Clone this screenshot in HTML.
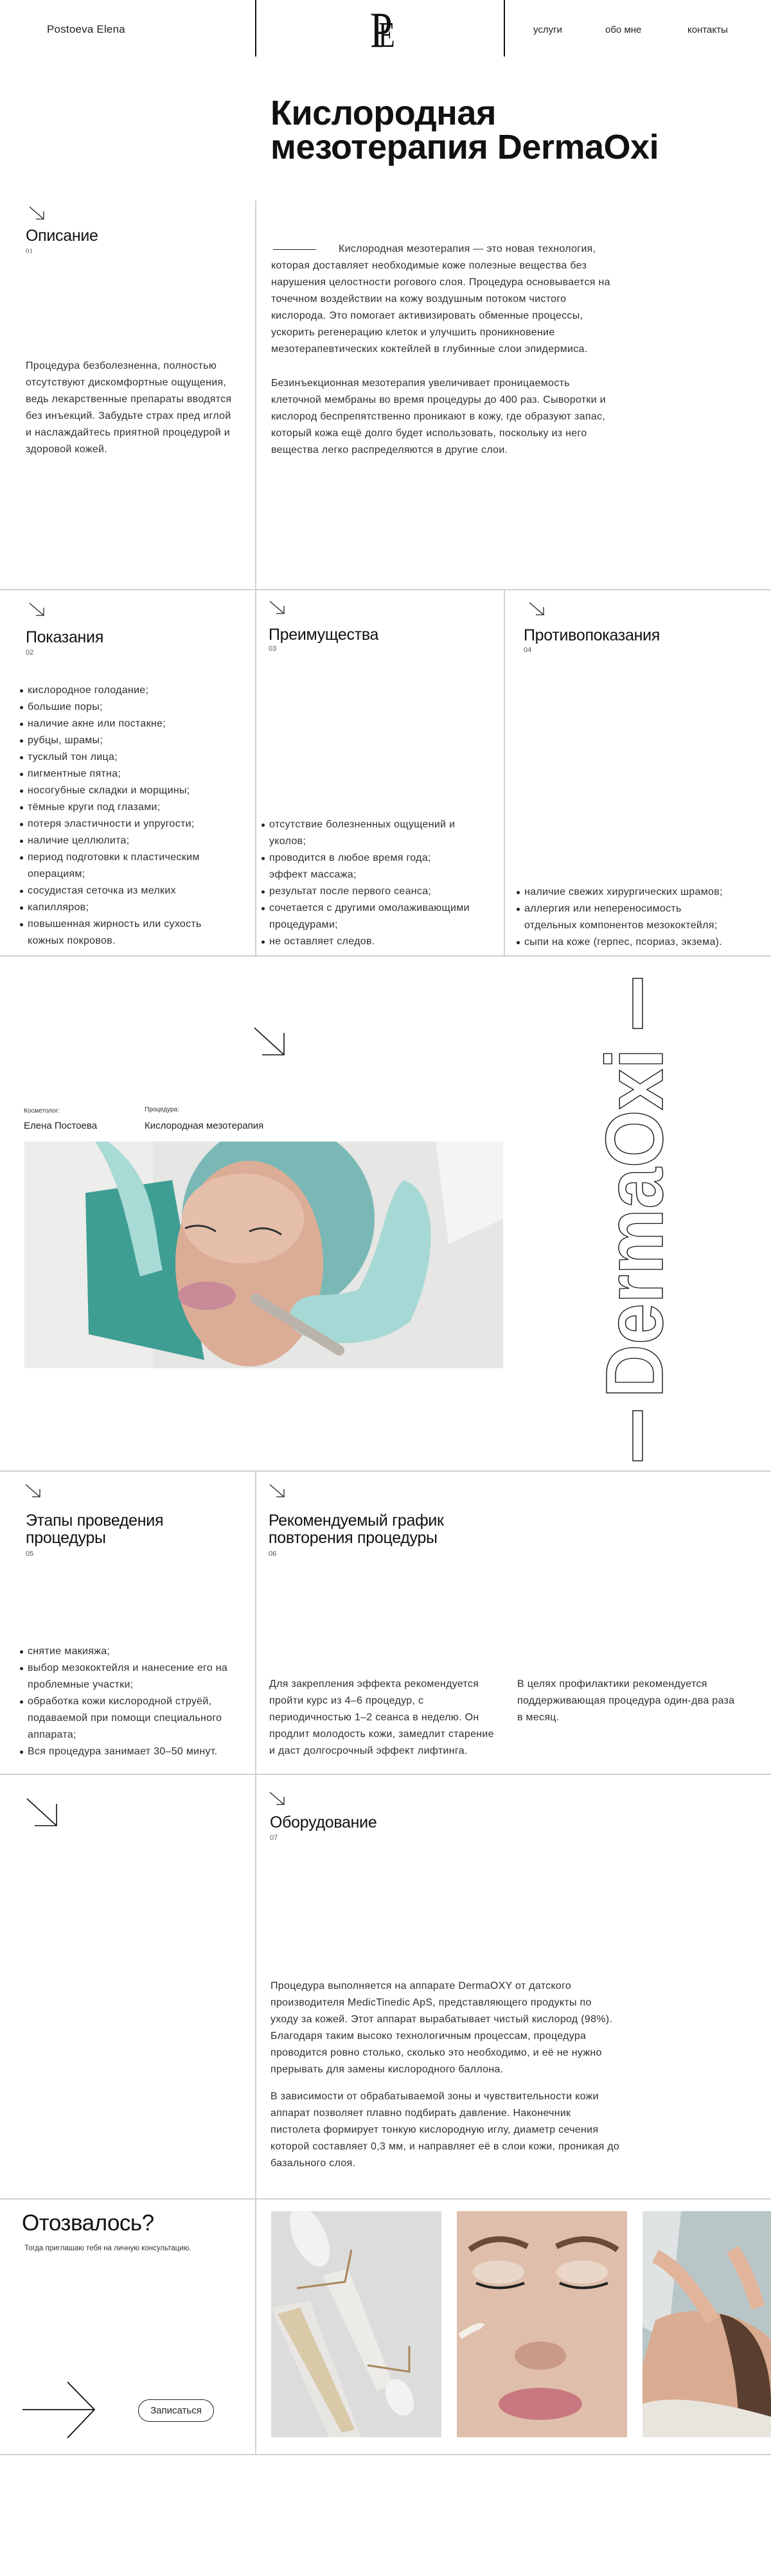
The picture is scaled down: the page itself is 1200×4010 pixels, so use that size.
<!DOCTYPE html>
<html lang="ru">
<head>
<meta charset="utf-8">
<style>
*{margin:0;padding:0;box-sizing:border-box}
html,body{width:1200px;height:4010px;background:#fff;overflow:hidden}
body{position:relative;font-family:"Liberation Sans","DejaVu Sans",sans-serif;color:#2a2a2a}
.a{position:absolute}
.hl{position:absolute;left:0;width:1200px;height:2px;background:#d2d2d2}
.vl{position:absolute;width:2px;background:#d2d2d2}
.t{position:absolute;font-size:16px;line-height:26px;letter-spacing:0.3px;white-space:nowrap;color:#2f2f2f}
.h{position:absolute;font-size:25px;font-weight:500;letter-spacing:-0.3px;color:#111;white-space:nowrap;line-height:30px}
.n{position:absolute;font-size:11px;color:#555;font-family:"Liberation Sans",sans-serif}
.li{position:relative;padding-left:12px}
.li.b::before{content:"";position:absolute;left:0;top:11px;width:5px;height:5px;border-radius:50%;background:#222}
</style>
</head>
<body>
<!-- header -->
<div class="a" style="left:73px;top:36px;font-size:17px;color:#222;letter-spacing:0.2px">Postoeva Elena</div>
<div class="a" style="left:397px;top:0;width:2px;height:88px;background:#111"></div>
<div class="a" style="left:784px;top:0;width:2px;height:88px;background:#111"></div>
<div class="a" style="left:576px;top:8px;font-family:'Liberation Serif',serif;font-size:78px;line-height:78px;color:#111;transform:scaleX(0.8);transform-origin:left">P</div>
<div class="a" style="left:589px;top:27px;font-family:'Liberation Serif',serif;font-size:56px;line-height:56px;color:#111;transform:scaleX(0.75);transform-origin:left">E</div>
<div class="a" style="left:830px;top:38px;font-size:15px;color:#222">услуги</div>
<div class="a" style="left:942px;top:38px;font-size:15px;color:#222">обо мне</div>
<div class="a" style="left:1070px;top:38px;font-size:15px;color:#222">контакты</div>

<!-- title -->
<div class="a" style="left:421px;top:150px;font-size:54px;line-height:53px;font-weight:bold;color:#111;letter-spacing:-0.5px;white-space:nowrap">Кислородная<br>мезотерапия DermaOxi</div>

<!-- section 1 -->
<div class="vl" style="left:397px;top:312px;height:606px"></div>
<svg class="a" style="left:44px;top:320px" width="28" height="24" viewBox="0 0 28 24"><path d="M2 2 L24 21 M12 21 H24 V9" stroke="#222" stroke-width="1.3" fill="none"/></svg>
<div class="h" style="left:40px;top:352px">Описание</div>
<div class="n" style="left:40px;top:385px;font-family:'Liberation Serif',serif">01</div>
<div class="t" style="left:40px;top:557px">Процедура безболезненна, полностью<br>отсутствуют дискомфортные ощущения,<br>ведь лекарственные препараты вводятся<br>без инъекций. Забудьте страх пред иглой<br>и наслаждайтесь приятной процедурой и<br>здоровой кожей.</div>
<div class="a" style="left:425px;top:388px;width:67px;height:1px;background:#222"></div>
<div class="t" style="left:422px;top:375px"><span style="display:inline-block;width:105px"></span>Кислородная мезотерапия — это новая технология,<br>которая доставляет необходимые коже полезные вещества без<br>нарушения целостности рогового слоя. Процедура основывается на<br>точечном воздействии на кожу воздушным потоком чистого<br>кислорода. Это помогает активизировать обменные процессы,<br>ускорить регенерацию клеток и улучшить проникновение<br>мезотерапевтических коктейлей в глубинные слои эпидермиса.</div>
<div class="t" style="left:422px;top:584px">Безинъекционная мезотерапия увеличивает проницаемость<br>клеточной мембраны во время процедуры до 400 раз. Сыворотки и<br>кислород беспрепятственно проникают в кожу, где образуют запас,<br>который кожа ещё долго будет использовать, поскольку из него<br>вещества легко распределяются в другие слои.</div>
<div class="hl" style="top:917px"></div>

<!-- section 2 -->
<div class="vl" style="left:397px;top:918px;height:572px"></div>
<div class="vl" style="left:784px;top:918px;height:572px"></div>
<svg class="a" style="left:44px;top:937px" width="28" height="24" viewBox="0 0 28 24"><path d="M2 2 L24 21 M12 21 H24 V9" stroke="#222" stroke-width="1.3" fill="none"/></svg>
<svg class="a" style="left:418px;top:934px" width="28" height="24" viewBox="0 0 28 24"><path d="M2 2 L24 21 M12 21 H24 V9" stroke="#222" stroke-width="1.3" fill="none"/></svg>
<svg class="a" style="left:822px;top:936px" width="28" height="24" viewBox="0 0 28 24"><path d="M2 2 L24 21 M12 21 H24 V9" stroke="#222" stroke-width="1.3" fill="none"/></svg>
<div class="h" style="left:40px;top:977px">Показания</div>
<div class="n" style="left:40px;top:1010px">02</div>
<div class="h" style="left:418px;top:973px">Преимущества</div>
<div class="n" style="left:418px;top:1004px">03</div>
<div class="h" style="left:815px;top:974px">Противопоказания</div>
<div class="n" style="left:815px;top:1006px">04</div>

<div class="t" style="left:31px;top:1062px">
<div class="li b">кислородное голодание;</div>
<div class="li b">большие поры;</div>
<div class="li b">наличие акне или постакне;</div>
<div class="li b">рубцы, шрамы;</div>
<div class="li b">тусклый тон лица;</div>
<div class="li b">пигментные пятна;</div>
<div class="li b">носогубные складки и морщины;</div>
<div class="li b">тёмные круги под глазами;</div>
<div class="li b">потеря эластичности и упругости;</div>
<div class="li b">наличие целлюлита;</div>
<div class="li b">период подготовки к пластическим</div>
<div class="li">операциям;</div>
<div class="li b">сосудистая сеточка из мелких</div>
<div class="li b">капилляров;</div>
<div class="li b">повышенная жирность или сухость</div>
<div class="li">кожных покровов.</div>
</div>
<div class="t" style="left:407px;top:1271px">
<div class="li b">отсутствие болезненных ощущений и</div>
<div class="li">уколов;</div>
<div class="li b">проводится в любое время года;</div>
<div class="li">эффект массажа;</div>
<div class="li b">результат после первого сеанса;</div>
<div class="li b">сочетается с другими омолаживающими</div>
<div class="li">процедурами;</div>
<div class="li b">не оставляет следов.</div>
</div>
<div class="t" style="left:804px;top:1376px">
<div class="li b">наличие свежих хирургических шрамов;</div>
<div class="li b">аллергия или непереносимость</div>
<div class="li">отдельных компонентов мезококтейля;</div>
<div class="li b">сыпи на коже (герпес, псориаз, экзема).</div>
</div>
<div class="hl" style="top:1487px"></div>

<!-- section 3 photo -->
<svg class="a" style="left:394px;top:1598px" width="54" height="48" viewBox="0 0 54 48"><path d="M2 2 L48 44 M14 44 H48 V10" stroke="#111" stroke-width="1.6" fill="none"/></svg>
<div class="a" style="left:37px;top:1724px;font-size:10px;color:#333">Косметолог:</div>
<div class="a" style="left:37px;top:1744px;font-size:15px;color:#222">Елена Постоева</div>
<div class="a" style="left:225px;top:1722px;font-size:10px;color:#333">Процедура:</div>
<div class="a" style="left:225px;top:1744px;font-size:15px;color:#222">Кислородная мезотерапия</div>
<svg class="a" style="left:38px;top:1777px" width="745" height="353" viewBox="0 0 745 353">
<rect width="745" height="353" fill="#e6e6e4"/>
<rect x="0" y="0" width="200" height="353" fill="#ededeb"/>
<polygon points="95,80 230,60 280,340 100,300" fill="#3f9e93"/>
<ellipse cx="395" cy="120" rx="150" ry="150" fill="#7ab8b6"/>
<ellipse cx="350" cy="190" rx="115" ry="160" fill="#dcad96"/>
<ellipse cx="340" cy="120" rx="95" ry="70" fill="#e6bfaa"/>
<path d="M130 0 C210 60 200 140 215 200 L180 210 C160 130 150 60 110 0Z" fill="#a8dad6"/>
<path d="M640 0 L745 0 L745 120 L660 160Z" fill="#f4f4f2"/>
<path d="M590 60 C650 80 640 200 600 280 C540 330 430 320 410 280 C420 220 470 250 520 230 C560 160 560 90 590 60Z" fill="#a6d9d5"/>
<ellipse cx="284" cy="240" rx="45" ry="22" fill="#c98a98"/>
<path d="M360 245 L490 325" stroke="#b9b3ab" stroke-width="16" stroke-linecap="round"/>
<path d="M250 135 q25 -10 48 5 M350 140 q25 -12 50 5" stroke="#333" stroke-width="3" fill="none"/>
</svg>
<svg class="a" style="left:930px;top:1515px" width="110" height="770" viewBox="0 0 110 770">
<rect x="55" y="8" width="15" height="78" fill="none" stroke="#111" stroke-width="1.4"/>
<rect x="55" y="681" width="15" height="78" fill="none" stroke="#111" stroke-width="1.4"/>
<text transform="translate(101,661) rotate(-90)" font-family="Liberation Sans,sans-serif" font-weight="bold" font-size="126" textLength="544" lengthAdjust="spacingAndGlyphs" fill="none" stroke="#111" stroke-width="1.4">DermaOxi</text>
</svg>
<div class="hl" style="top:2289px"></div>

<!-- section 4 -->
<div class="vl" style="left:397px;top:2290px;height:472px"></div>
<svg class="a" style="left:38px;top:2309px" width="28" height="24" viewBox="0 0 28 24"><path d="M2 2 L24 21 M12 21 H24 V9" stroke="#222" stroke-width="1.3" fill="none"/></svg>
<svg class="a" style="left:418px;top:2309px" width="28" height="24" viewBox="0 0 28 24"><path d="M2 2 L24 21 M12 21 H24 V9" stroke="#222" stroke-width="1.3" fill="none"/></svg>
<div class="h" style="left:40px;top:2354px;line-height:27px">Этапы проведения<br>процедуры</div>
<div class="n" style="left:40px;top:2413px">05</div>
<div class="h" style="left:418px;top:2354px;line-height:27px">Рекомендуемый график<br>повторения процедуры</div>
<div class="n" style="left:418px;top:2413px">06</div>
<div class="t" style="left:31px;top:2558px">
<div class="li b">снятие макияжа;</div>
<div class="li b">выбор мезококтейля и нанесение его на</div>
<div class="li">проблемные участки;</div>
<div class="li b">обработка кожи кислородной струёй,</div>
<div class="li">подаваемой при помощи специального</div>
<div class="li">аппарата;</div>
<div class="li b">Вся процедура занимает 30–50 минут.</div>
</div>
<div class="t" style="left:419px;top:2609px">Для закрепления эффекта рекомендуется<br>пройти курс из 4–6 процедур, с<br>периодичностью 1–2 сеанса в неделю. Он<br>продлит молодость кожи, замедлит старение<br>и даст долгосрочный эффект лифтинга.</div>
<div class="t" style="left:805px;top:2609px">В целях профилактики рекомендуется<br>поддерживающая процедура один-два раза<br>в месяц.</div>
<div class="hl" style="top:2761px"></div>

<!-- section 5 -->
<div class="vl" style="left:397px;top:2762px;height:662px"></div>
<svg class="a" style="left:40px;top:2798px" width="52" height="48" viewBox="0 0 52 48"><path d="M2 2 L48 44 M14 44 H48 V10" stroke="#111" stroke-width="1.6" fill="none"/></svg>
<svg class="a" style="left:418px;top:2788px" width="28" height="24" viewBox="0 0 28 24"><path d="M2 2 L24 21 M12 21 H24 V9" stroke="#222" stroke-width="1.3" fill="none"/></svg>
<div class="h" style="left:420px;top:2822px">Оборудование</div>
<div class="n" style="left:420px;top:2855px">07</div>
<div class="t" style="left:421px;top:3079px">Процедура выполняется на аппарате DermaOXY от датского<br>производителя MedicTinedic ApS, представляющего продукты по<br>уходу за кожей. Этот аппарат вырабатывает чистый кислород (98%).<br>Благодаря таким высоко технологичным процессам, процедура<br>проводится ровно столько, сколько это необходимо, и её не нужно<br>прерывать для замены кислородного баллона.</div>
<div class="t" style="left:421px;top:3251px">В зависимости от обрабатываемой зоны и чувствительности кожи<br>аппарат позволяет плавно подбирать давление. Наконечник<br>пистолета формирует тонкую кислородную иглу, диаметр сечения<br>которой составляет 0,3 мм, и направляет её в слои кожи, проникая до<br>базального слоя.</div>
<div class="hl" style="top:3422px"></div>

<!-- section 6 -->
<div class="vl" style="left:397px;top:3423px;height:398px"></div>
<div class="a" style="left:34px;top:3441px;font-size:35px;font-weight:500;color:#111;letter-spacing:-0.5px">Отозвалось?</div>
<div class="a" style="left:38px;top:3494px;font-size:11.5px;color:#333">Тогда приглашаю тебя на личную консультацию.</div>
<svg class="a" style="left:34px;top:3706px" width="120" height="92" viewBox="0 0 120 92"><path d="M1 45 H113 M71 2 L113 45 L71 89" stroke="#111" stroke-width="1.8" fill="none"/></svg>
<div class="a" style="left:215px;top:3735px;width:118px;height:35px;border:1px solid #222;border-radius:18px;font-size:15px;line-height:33px;text-align:center;color:#222">Записаться</div>
<svg class="a" style="left:422px;top:3442px" width="265" height="352" viewBox="0 0 265 352">
<rect width="265" height="352" fill="#dcdcdc"/>
<path d="M0 150 L60 140 L140 352 L90 352Z" fill="#e8e6e2"/>
<path d="M10 160 L45 150 L130 340 L110 345Z" fill="#d9c9a8"/>
<path d="M80 100 L120 90 L190 270 L165 280Z" fill="#ecebe8"/>
<ellipse cx="60" cy="40" rx="25" ry="50" transform="rotate(-25 60 40)" fill="#f2f2f0"/>
<ellipse cx="200" cy="290" rx="20" ry="30" transform="rotate(-25 200 290)" fill="#f2f2f0"/>
<path d="M40 120 L115 110 L125 60 M150 240 L215 250 L215 210" stroke="#a8865a" stroke-width="3" fill="none"/>
</svg>
<svg class="a" style="left:711px;top:3442px" width="265" height="352" viewBox="0 0 265 352">
<rect width="265" height="352" fill="#d8b7a3"/>
<rect width="265" height="352" fill="#e5c5b0" opacity="0.6"/>
<path d="M20 60 q40 -30 90 -5 M155 55 q50 -25 95 5" stroke="#6b4a3a" stroke-width="9" fill="none"/>
<ellipse cx="65" cy="95" rx="40" ry="18" fill="#ead7c9"/>
<ellipse cx="195" cy="95" rx="40" ry="18" fill="#ead7c9"/>
<path d="M30 112 q35 15 75 0 M160 112 q35 15 75 0" stroke="#222" stroke-width="4" fill="none"/>
<ellipse cx="130" cy="225" rx="40" ry="22" fill="#c99a88"/>
<ellipse cx="130" cy="300" rx="65" ry="25" fill="#c97882"/>
<path d="M5 195 q30 -20 35 -15" stroke="#f4efe8" stroke-width="10" fill="none"/>
</svg>
<svg class="a" style="left:1000px;top:3442px" width="200" height="352" viewBox="0 0 200 352">
<rect width="200" height="352" fill="#b9c6c8"/>
<path d="M0 0 H60 L40 200 L0 180Z" fill="#dfe3e3"/>
<path d="M20 170 C80 140 160 160 200 200 L200 352 L0 352 L0 240Z" fill="#d9ab90"/>
<path d="M120 160 C180 170 200 240 200 300 L200 352 L150 352 C150 280 140 220 120 160Z" fill="#5a3f30"/>
<path d="M0 300 Q60 280 200 320 V352 H0Z" fill="#e8e4de"/>
<path d="M20 70 C60 90 90 140 110 170" stroke="#e2b49a" stroke-width="22" fill="none"/>
<path d="M140 60 C160 90 170 120 180 150" stroke="#e2b49a" stroke-width="22" fill="none"/>
</svg>
<div class="hl" style="top:3820px"></div>
</body>
</html>
